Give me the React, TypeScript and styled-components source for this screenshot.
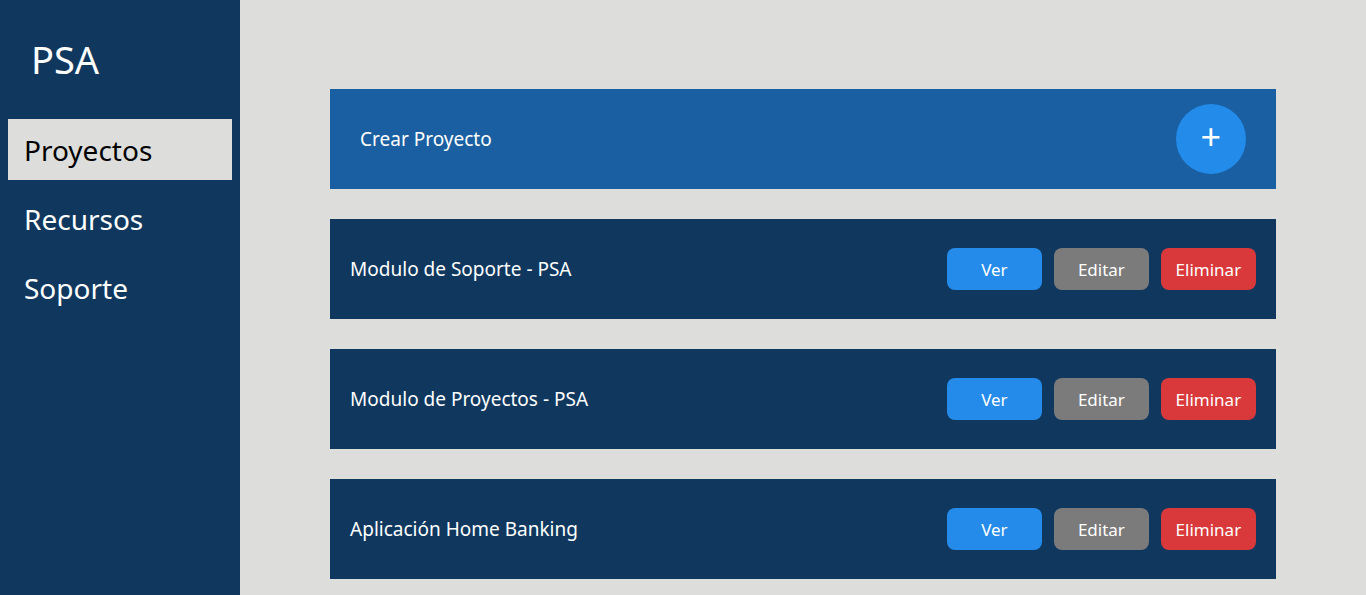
import React from "react";
import styled, { createGlobalStyle } from "styled-components";

const Global = createGlobalStyle`
  html, body { margin: 0; padding: 0; }
  body { font-family: "Noto Sans", "Open Sans", sans-serif; background: #dddddc; }
  * { box-sizing: border-box; }
`;

const Layout = styled.div`
  display: flex;
  min-height: 100vh;
`;

const Sidebar = styled.aside`
  width: 240px;
  flex-shrink: 0;
  background: #10385f;
  position: sticky;
  top: 0;
  height: 100vh;
  padding: 8px 8px 0;
`;

const Brand = styled.div`
  color: #fff;
  font-size: 38px;
  padding: 25px 0 0 23px;
  height: 111px;
`;

const NavList = styled.nav`
  display: flex;
  flex-direction: column;
  gap: 8px;
`;

const NavItem = styled.a<{ $active?: boolean }>`
  display: flex;
  align-items: center;
  height: 61px;
  padding-left: 16px;
  font-size: 28px;
  color: ${(p) => (p.$active ? "#000" : "#fff")};
  background: ${(p) => (p.$active ? "#dddddc" : "transparent")};
  text-decoration: none;
`;

const Main = styled.main`
  flex: 1;
  padding: 89px 0 16px;
  display: flex;
  flex-direction: column;
  align-items: center;
  gap: 30px;
`;

const Card = styled.div<{ $primary?: boolean }>`
  width: 84%;
  height: 100px;
  display: flex;
  align-items: center;
  justify-content: space-between;
  background: ${(p) => (p.$primary ? "#1a5fa1" : "#10385f")};
  color: #fff;
  padding: ${(p) => (p.$primary ? "0 30px" : "0 20px")};
`;

const CardTitle = styled.span<{ $size?: number }>`
  font-size: ${(p) => p.$size ?? 19}px;
`;

const AddButton = styled.button`
  width: 70px;
  height: 70px;
  border-radius: 50%;
  border: none;
  background: #238bea;
  color: #fff;
  font-size: 36px;
  line-height: 1;
  display: flex;
  align-items: center;
  justify-content: center;
  cursor: pointer;
  font-family: inherit;
  padding: 0 0 4px;
`;

const Actions = styled.div`
  display: flex;
  gap: 12px;
`;

const ActionButton = styled.button<{ $color: string }>`
  width: 95px;
  height: 42px;
  border: none;
  border-radius: 8px;
  background: ${(p) => p.$color};
  color: #fff;
  font-size: 17px;
  font-family: inherit;
  cursor: pointer;
`;

const projects = [
  "Modulo de Soporte - PSA",
  "Modulo de Proyectos - PSA",
  "Aplicación Home Banking",
];

export default function App() {
  return (
    <>
      <Global />
      <Layout>
        <Sidebar>
          <Brand>PSA</Brand>
          <NavList>
            <NavItem $active>Proyectos</NavItem>
            <NavItem>Recursos</NavItem>
            <NavItem>Soporte</NavItem>
          </NavList>
        </Sidebar>
        <Main>
          <Card $primary>
            <CardTitle $size={19}>Crear Proyecto</CardTitle>
            <AddButton>+</AddButton>
          </Card>
          {projects.map((p) => (
            <Card key={p}>
              <CardTitle>{p}</CardTitle>
              <Actions>
                <ActionButton $color="#248bea">Ver</ActionButton>
                <ActionButton $color="#7b7b7b">Editar</ActionButton>
                <ActionButton $color="#d9393b">Eliminar</ActionButton>
              </Actions>
            </Card>
          ))}
        </Main>
      </Layout>
    </>
  );
}
